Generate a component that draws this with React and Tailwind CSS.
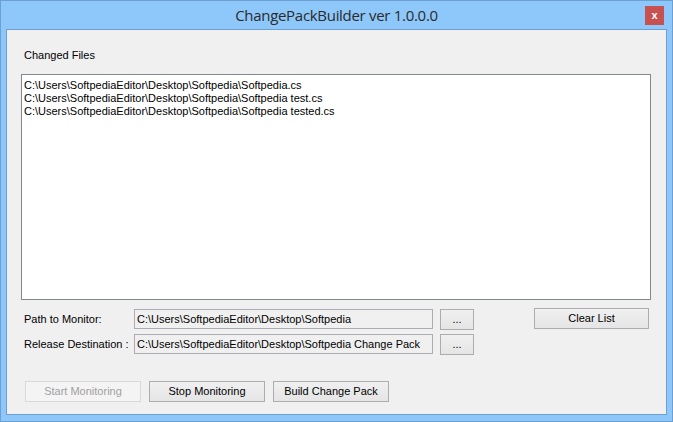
const FILES = [
  'C:\\Users\\SoftpediaEditor\\Desktop\\Softpedia\\Softpedia.cs',
  'C:\\Users\\SoftpediaEditor\\Desktop\\Softpedia\\Softpedia test.cs',
  'C:\\Users\\SoftpediaEditor\\Desktop\\Softpedia\\Softpedia tested.cs',
]

function Btn({ children, className = '', disabled }) {
  return (
    <div
      className={
        'flex items-center justify-center h-[21px] border ' +
        (disabled
          ? 'border-[#d9d9d9] bg-[#f4f4f4] text-[#a0a0a0] '
          : 'border-[#adadad] bg-gradient-to-b from-[#f0f0f0] to-[#e5e5e5] text-black ') +
        className
      }
    >
      {children}
    </div>
  )
}

function PathRow({ label, value, className = '' }) {
  return (
    <div className={'flex items-start ' + className}>
      <div className="w-[110px] ml-[3px] h-[21px] flex items-center">{label}</div>
      <div className="w-[299px] h-[20px] border border-[#abadb3] bg-[#f0f0f0] pl-[2px] flex items-center">{value}</div>
      <Btn className="ml-[7px] w-[34px]">...</Btn>
    </div>
  )
}

export default function App() {
  return (
    <div className="w-[673px] h-[422px] bg-[#8ec7f9] border border-[#6d9fd2] flex flex-col" style={{ fontFamily: '"Liberation Sans", Arial, sans-serif' }}>
      <div className="h-[28px] relative flex items-center justify-center">
        <span className="text-[15px] text-[#2b2b2b]" style={{ fontFamily: '"Open Sans", sans-serif', letterSpacing: '-0.3px' }}>
          ChangePackBuilder ver 1.0.0.0
        </span>
        <div className="absolute left-[644px] top-[5px] w-[19px] h-[19px] bg-[#c75050] flex items-center justify-center text-white text-[11px] font-bold leading-none">
          x
        </div>
      </div>
      <div className="mx-[5px] h-[386px] border border-[#6f9fd0] bg-[#f0f0f0] text-[11px] leading-[13px] pl-[14px]">
        <div className="ml-[3px] mt-[19px]">Changed Files</div>
        <div className="mt-[12px] w-[630px] h-[226px] border border-[#828790] bg-white pl-[2px] pt-[4px]">
          {FILES.map(f => (
            <div key={f}>{f}</div>
          ))}
        </div>
        <div className="flex items-start mt-[8px]">
          <PathRow label="Path to Monitor:" value="C:\Users\SoftpediaEditor\Desktop\Softpedia" className="mt-[1px]" />
          <Btn className="ml-[60px] w-[115px]">Clear List</Btn>
        </div>
        <PathRow label="Release Destination :" value="C:\Users\SoftpediaEditor\Desktop\Softpedia Change Pack" className="mt-[4px]" />
        <div className="flex mt-[26px] ml-[4px] gap-[8px]">
          <Btn disabled className="w-[116px]">Start Monitoring</Btn>
          <Btn className="w-[116px]">Stop Monitoring</Btn>
          <Btn className="w-[116px]">Build Change Pack</Btn>
        </div>
      </div>
    </div>
  )
}
